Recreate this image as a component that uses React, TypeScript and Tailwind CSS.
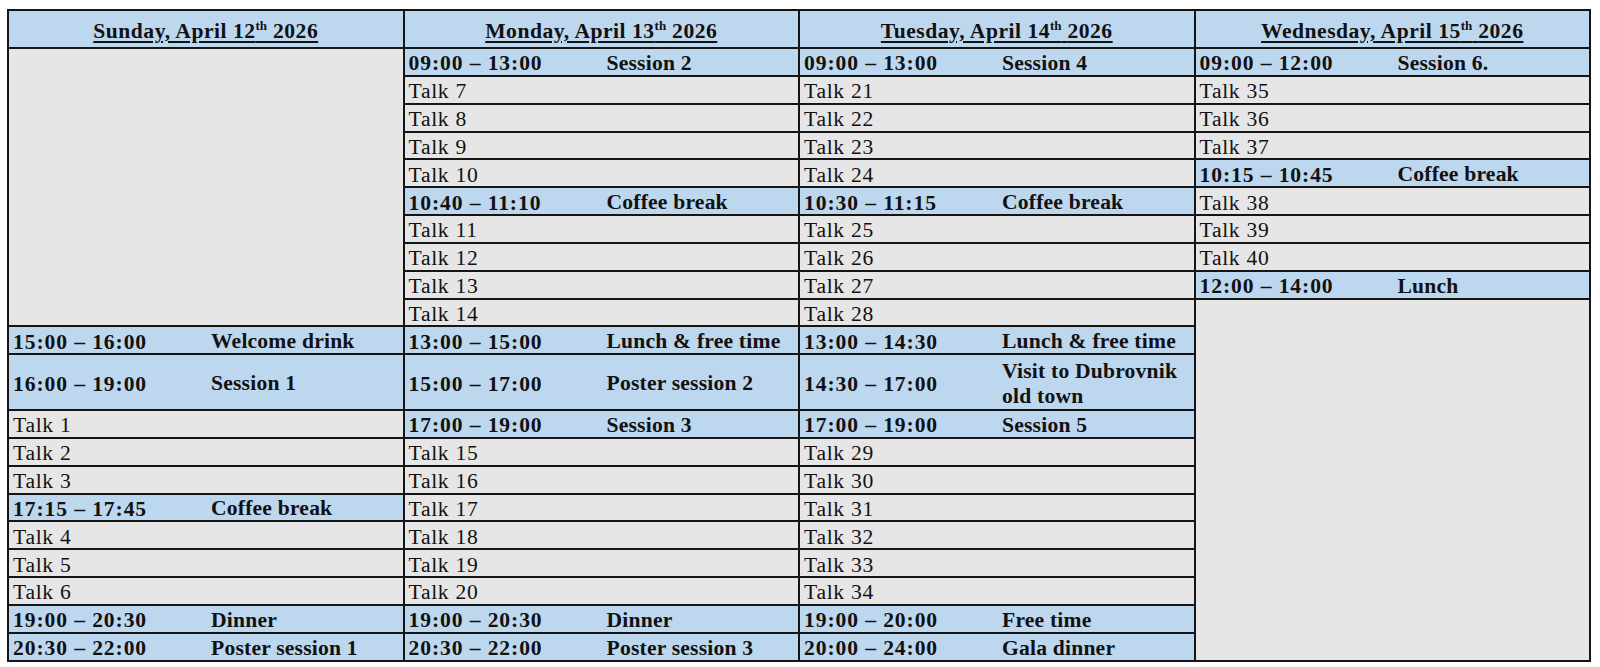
import React from 'react';

type Cell =
  | { kind: 'talk'; text: string }
  | { kind: 'slot'; time: string; label: React.ReactNode }
  | { kind: 'empty'; span: number }
  | null;

const talk = (n: number): Cell => ({ kind: 'talk', text: `Talk ${n}` });
const slot = (time: string, label: React.ReactNode): Cell => ({ kind: 'slot', time, label });

// each row: [sunday, monday, tuesday, wednesday]; null = covered by a rowSpan above
const rows: Cell[][] = [
  [{ kind: 'empty', span: 10 }, slot('09:00 – 13:00', 'Session 2'), slot('09:00 – 13:00', 'Session 4'), slot('09:00 – 12:00', 'Session 6.')],
  [null, talk(7), talk(21), talk(35)],
  [null, talk(8), talk(22), talk(36)],
  [null, talk(9), talk(23), talk(37)],
  [null, talk(10), talk(24), slot('10:15 – 10:45', 'Coffee break')],
  [null, slot('10:40 – 11:10', 'Coffee break'), slot('10:30 – 11:15', 'Coffee break'), talk(38)],
  [null, talk(11), talk(25), talk(39)],
  [null, talk(12), talk(26), talk(40)],
  [null, talk(13), talk(27), slot('12:00 – 14:00', 'Lunch')],
  [null, talk(14), talk(28), { kind: 'empty', span: 12 }],
  [slot('15:00 – 16:00', 'Welcome drink'), slot('13:00 – 15:00', 'Lunch & free time'), slot('13:00 – 14:30', 'Lunch & free time'), null],
  [
    slot('16:00 – 19:00', 'Session 1'),
    slot('15:00 – 17:00', 'Poster session 2'),
    slot('14:30 – 17:00', <>Visit to Dubrovnik<br />old town</>),
    null,
  ],
  [talk(1), slot('17:00 – 19:00', 'Session 3'), slot('17:00 – 19:00', 'Session 5'), null],
  [talk(2), talk(15), talk(29), null],
  [talk(3), talk(16), talk(30), null],
  [slot('17:15 – 17:45', 'Coffee break'), talk(17), talk(31), null],
  [talk(4), talk(18), talk(32), null],
  [talk(5), talk(19), talk(33), null],
  [talk(6), talk(20), talk(34), null],
  [slot('19:00 – 20:30', 'Dinner'), slot('19:00 – 20:30', 'Dinner'), slot('19:00 – 20:00', 'Free time'), null],
  [slot('20:30 – 22:00', 'Poster session 1'), slot('20:30 – 22:00', 'Poster session 3'), slot('20:00 – 24:00', 'Gala dinner'), null],
];

const days = [
  { name: 'Sunday, April 12', sup: 'th', year: '2026' },
  { name: 'Monday, April 13', sup: 'th', year: '2026' },
  { name: 'Tuesday, April 14', sup: 'th', year: '2026' },
  { name: 'Wednesday, April 15', sup: 'th', year: '2026' },
];

const borderCls = 'border-2 border-[#151515]';

const renderCell = (cell: Cell, key: number, tall: boolean) => {
  if (cell === null) return null;
  const h = tall ? 'h-[53.7px]' : 'h-[25.85px]';
  if (cell.kind === 'empty') {
    return <td key={key} rowSpan={cell.span} className={`${borderCls} bg-[#e7e6e6] p-0`} />;
  }
  if (cell.kind === 'talk') {
    return (
      <td key={key} className={`${borderCls} bg-[#e7e6e6] p-0 align-middle`}>
        <div className={`${h} flex items-center overflow-hidden pl-[4px] pt-[3px] leading-[22px] tracking-[0.7px]`}>
          {cell.text}
        </div>
      </td>
    );
  }
  return (
    <td key={key} className={`${borderCls} bg-[#bdd7ee] p-0 align-middle font-bold`}>
      <div className={`${h} flex items-center overflow-hidden pl-[4px] pt-[3px]`}>
        <span className="w-[198px] shrink-0 leading-[22px] tracking-[0.9px]">{cell.time}</span>
        <span className="leading-[25px] tracking-[0.2px]">{cell.label}</span>
      </div>
    </td>
  );
};

const App: React.FC = () => {
  return (
    <div className="min-h-screen bg-white pl-[7px] pt-[9px] text-[21.6px] text-[#111] font-['Liberation_Serif','Times_New_Roman',serif]">
      <table className="w-[1584px] table-fixed border-collapse">
        <colgroup>
          <col className="w-1/4" />
          <col className="w-1/4" />
          <col className="w-1/4" />
          <col className="w-1/4" />
        </colgroup>
        <thead>
          <tr>
            {days.map((d) => (
              <th key={d.name} className={`${borderCls} bg-[#bdd7ee] p-0 text-center align-middle font-bold`}>
                <div className="h-[36px] flex items-center justify-center pt-[3px] leading-[22px] tracking-[0.5px]">
                  <span className="underline decoration-[1.5px] underline-offset-[3px]">
                    {d.name}
                    <sup className="text-[13px] -top-[8px] tracking-normal">{d.sup}</sup> {d.year}
                  </span>
                </div>
              </th>
            ))}
          </tr>
        </thead>
        <tbody>
          {rows.map((r, i) => (
            <tr key={i}>
              {r.map((c, j) => renderCell(c, j, i === 11))}
            </tr>
          ))}
        </tbody>
      </table>
    </div>
  );
};

export default App;
